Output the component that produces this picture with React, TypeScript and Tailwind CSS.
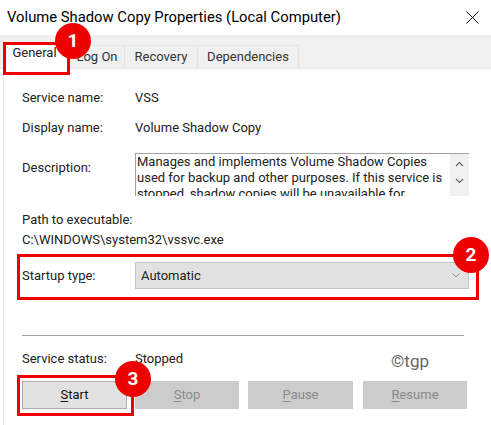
const font = { fontFamily: 'Roboto, "Noto Sans", sans-serif' };

function Tab({ label, active, className }: { label: string; active?: boolean; className: string }) {
  return (
    <div
      className={`flex items-center justify-center ${className} ${
        active ? "h-[27px] bg-white pr-[5px] pb-[5px] text-[#222]" : "h-[23px] border-t border-r border-[#e3e3e3] bg-[#f0f0f0] text-[#333]"
      }`}
    >
      {label}
    </div>
  );
}

function Row({ label, value, className }: { label: React.ReactNode; value: string; className: string }) {
  return (
    <div className={`flex items-center ${className}`}>
      <div className="w-[113px]">{label}</div>
      <div>{value}</div>
    </div>
  );
}

function Button({ label, rest, className }: { label: string; rest: string; className: string }) {
  return (
    <div className={`flex h-[28px] items-center justify-center bg-[#cccccc] text-[#8a8a8a] ${className}`}>
      <span>
        <span className="underline underline-offset-2">{label}</span>
        {rest}
      </span>
    </div>
  );
}

function Badge({ n, className }: { n: number; className: string }) {
  return (
    <div
      className={`absolute flex h-[36px] w-[36px] items-center justify-center rounded-full bg-[#ee0000] text-[19px] font-bold text-white ${className}`}
    >
      {n}
    </div>
  );
}

export default function App() {
  return (
    <div className="relative h-[425px] w-[491px] overflow-hidden bg-white text-[13px] text-[#222]" style={font}>
      <div className="flex h-[35px] items-center justify-between pr-[10px] pl-[7px] text-[14.8px] text-black">
        <span>Volume Shadow Copy Properties (Local Computer)</span>
        <svg width="13" height="13" viewBox="0 0 13 13" className="mr-[2px]">
          <path d="M0.5 0.5L12.5 12.5M12.5 0.5L0.5 12.5" stroke="#111" strokeWidth="1" fill="none" />
        </svg>
      </div>

      <div className="flex h-[34px] items-end border-b border-[#e6e6e6] bg-[#f0f0f0] pl-[4px]">
        <Tab label="General" active className="-mb-px w-[66px]" />
        <Tab label="Log On" className="w-[55px]" />
        <Tab label="Recovery" className="w-[73px]" />
        <Tab label="Dependencies" className="w-[101px]" />
      </div>

      <div className="ml-[3px] h-[356px] border-l border-[#e6e6e6] pt-[18px] pl-[18px]">
        <Row label="Service name:" value="VSS" className="h-[22px]" />
        <Row label="Display name:" value="Volume Shadow Copy" className="mt-[8px] h-[22px]" />

        <div className="mt-[14px] flex">
          <div className="w-[113px] pt-[5px]">Description:</div>
          <div className="flex h-[43px] w-[334px] overflow-hidden border-t border-l border-[#a0a0a0]">
            <p className="w-[314px] pl-[1px] leading-[16px] text-[#222]">
              Manages and implements Volume Shadow Copies used for backup and other purposes. If this service is stopped,
              shadow copies will be unavailable for
            </p>
            <div className="flex w-[19px] flex-col items-center gap-[3px] bg-[#f0f0f0] pt-[7px]">
              <svg width="9" height="6" viewBox="0 0 9 6">
                <path d="M1 5L4.5 1.5L8 5" stroke="#666" strokeWidth="1.2" fill="none" />
              </svg>
              <svg width="9" height="6" viewBox="0 0 9 6" className="mt-[8px]">
                <path d="M1 1L4.5 4.5L8 1" stroke="#666" strokeWidth="1.2" fill="none" />
              </svg>
            </div>
          </div>
        </div>

        <div className="mt-[14px] leading-[20px]">Path to executable:</div>
        <div className="leading-[20px]">C:\WINDOWS\system32\vssvc.exe</div>

        <div className="mt-[12px] flex items-center">
          <div className="w-[113px]">
            Startup ty<span className="underline underline-offset-2">p</span>e:
          </div>
          <div className="flex h-[27px] w-[334px] items-center justify-between border border-[#c4c4c4] bg-[#e1e1e1] pr-[8px] pl-[5px]">
            <span>Automatic</span>
            <svg width="8" height="5" viewBox="0 0 8 5">
              <path d="M0.5 0.5L4 4L7.5 0.5" stroke="#999" strokeWidth="1" fill="none" />
            </svg>
          </div>
        </div>

        <div className="mt-[46px] h-px w-[442px] bg-[#a0a0a0]" />

        <Row label="Service status:" value="Stopped" className="mt-[12px] h-[22px]" />

        <div className="mt-[11px] flex">
          <div className="flex h-[28px] w-[105px] items-center justify-center border border-[#adadad] bg-[#e1e1e1] text-[#111]">
            <span>
              <span className="underline underline-offset-2">S</span>tart
            </span>
          </div>
          <Button label="S" rest="top" className="ml-[8px] w-[104px]" />
          <Button label="P" rest="ause" className="ml-[9px] w-[105px]" />
          <Button label="R" rest="esume" className="ml-[10px] w-[104px]" />
        </div>
      </div>

      <div className="absolute top-[349px] left-[391px] text-[17px] text-[#666]">©tgp</div>

      <div className="absolute top-[42px] left-[3px] h-[33px] w-[67px] border-[3px] border-[#ee0000]" />
      <div className="absolute top-[254px] left-[17px] h-[46px] w-[462px] border-[3px] border-[#ee0000]" />
      <div className="absolute top-[375px] left-[17px] h-[41px] w-[117px] border-[3px] border-[#ee0000]" />
      <Badge n={1} className="top-[23px] left-[55px]" />
      <Badge n={2} className="top-[237px] left-[453px]" />
      <Badge n={3} className="top-[361px] left-[115px]" />
    </div>
  );
}
